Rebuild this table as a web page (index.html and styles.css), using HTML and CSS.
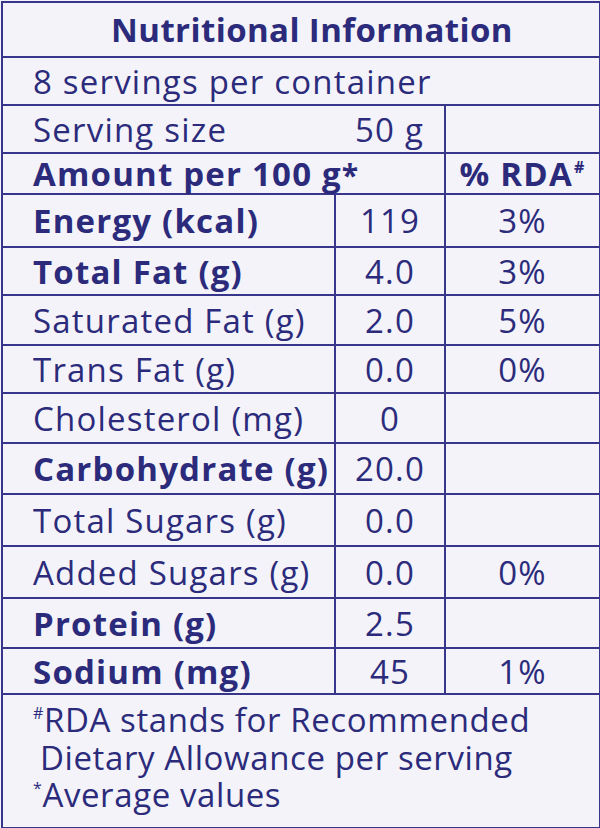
FILE: index.html
```html
<!DOCTYPE html>
<html>
<head>
<meta charset="utf-8">
<link rel="stylesheet" href="styles.css">
</head>
<body>
<table class="nf">
  <colgroup>
    <col class="c1">
    <col class="c2">
    <col class="c3">
  </colgroup>
  <tr class="r-title"><td colspan="3" class="title">Nutritional Information</td></tr>
  <tr class="r-48"><td colspan="3" class="lbl">8 servings per container</td></tr>
  <tr class="r-48 serving"><td class="lbl nob">Serving size</td><td class="val">50 g</td><td></td></tr>
  <tr class="r-amt"><td colspan="2" class="lbl b">Amount per 100 g<span class="ast">*</span></td><td class="val b">% RDA<sup class="hash">#</sup></td></tr>
  <tr class="r-53"><td class="lbl b">Energy (kcal)</td><td class="val">119</td><td class="val">3%</td></tr>
  <tr class="r-48"><td class="lbl b">Total Fat (g)</td><td class="val">4.0</td><td class="val">3%</td></tr>
  <tr class="r-50"><td class="lbl">Saturated Fat (g)</td><td class="val">2.0</td><td class="val">5%</td></tr>
  <tr class="r-48"><td class="lbl">Trans Fat (g)</td><td class="val">0.0</td><td class="val">0%</td></tr>
  <tr class="r-50"><td class="lbl">Cholesterol (mg)</td><td class="val">0</td><td class="val"></td></tr>
  <tr class="r-51"><td class="lbl b">Carbohydrate (g)</td><td class="val">20.0</td><td class="val"></td></tr>
  <tr class="r-52"><td class="lbl">Total Sugars (g)</td><td class="val">0.0</td><td class="val"></td></tr>
  <tr class="r-52"><td class="lbl">Added Sugars (g)</td><td class="val">0.0</td><td class="val">0%</td></tr>
  <tr class="r-50"><td class="lbl b">Protein (g)</td><td class="val">2.5</td><td class="val"></td></tr>
  <tr class="r-46"><td class="lbl b">Sodium (mg)</td><td class="val">45</td><td class="val">1%</td></tr>
  <tr class="r-foot"><td colspan="3" class="foot">
    <div class="fl"><sup class="fs">#</sup>RDA stands for Recommended</div>
    <div class="fl ind">Dietary Allowance per serving</div>
    <div class="fl"><sup class="fs">*</sup>Average values</div>
  </td></tr>
</table>
</body>
</html>
```

FILE: styles.css
```css
html, body {
  margin: 0;
  padding: 0;
  background: #f3f3f9;
}
body {
  font-family: "Open Sans", "Noto Sans", sans-serif;
  color: #2c2b7b;
}
.nf {
  border-collapse: collapse;
  margin: 1px 0 0 1px;
  width: 598px;
  table-layout: fixed;
  background: #f3f3f9;
}
.c1 { width: 333px; }
.c2 { width: 110px; }
.c3 { width: 155px; }
.nf td {
  border: 2px solid #37368a;
  padding: 0;
  font-size: 33px;
  letter-spacing: 1.2px;
  line-height: 1;
  white-space: nowrap;
  overflow: visible;
}
.nf td.title {
  text-align: center;
  font-weight: 700;
  font-size: 33px;
  letter-spacing: 0.4px;
  padding-left: 22px;
}
.nf td.lbl {
  padding-left: 30px;
}
.nf td.b { font-weight: 700; }
.nf td.val { text-align: center; }
.nf .serving td.nob { border-right: none; }
.nf .serving td.val { border-left: none; }
.ast {
  font-size: 30px;
}
.hash {
  font-size: 16px;
  line-height: 1;
  vertical-align: 0;
  position: relative;
  top: -13px;
  margin-left: 1px;
}
.r-title { height: 55px; }
.r-amt { height: 41px; }
.r-46 { height: 46px; }
.r-48 { height: 48px; }
.r-50 { height: 50px; }
.r-51 { height: 51px; }
.r-52 { height: 52px; }
.r-53 { height: 53px; }
.r-foot { height: 134px; }
.nf td.foot {
  padding: 6px 0 0 30px;
  vertical-align: top;
  letter-spacing: 0.6px;
}
.fl {
  line-height: 37.5px;
}
.ind { padding-left: 7px; }
.fs {
  font-size: 16px;
  line-height: 1;
  vertical-align: 0;
  position: relative;
  top: -13px;
}
```
